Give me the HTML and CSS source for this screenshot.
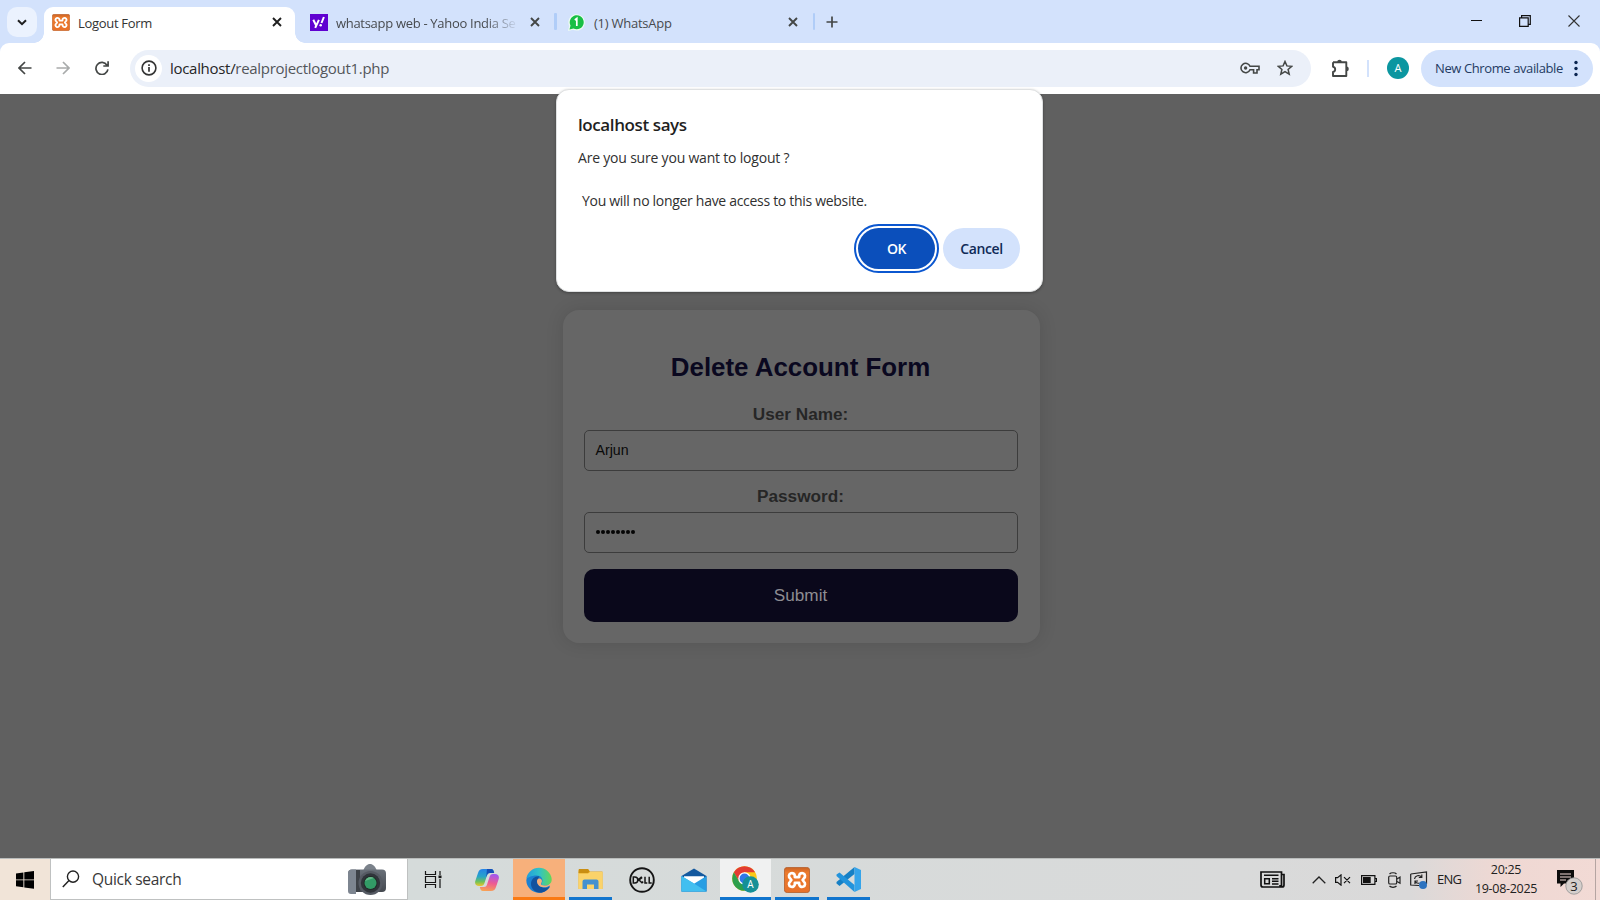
FILE: index.html
```
<!DOCTYPE html>
<html lang="en">
<head>
<meta charset="utf-8">
<title>Logout Form</title>
<link rel="stylesheet" href="styles.css">
</head>
<body>
<svg width="0" height="0" class="defs">
  <defs>
    <linearGradient id="xo" x1="0" y1="0" x2="0" y2="1"><stop offset="0" stop-color="#c96224"/><stop offset=".2" stop-color="#ec7a2c"/><stop offset="1" stop-color="#e8712a"/></linearGradient>
    <symbol id="xampp" viewBox="0 0 24 24">
      <rect x=".4" y=".4" width="23.2" height="23.2" rx="2.5" fill="url(#xo)" stroke="#b5602c" stroke-width=".8"/>
      <path d="M10 9.300V8.300a2.700 2.700 0 1 0-4.400 2.100L6.800 12l-1.200 1.600a2.700 2.700 0 1 0 4.400 2.100V14.700h4v1a2.700 2.700 0 1 0 4.400-2.100L17.200 12l1.200-1.600a2.700 2.700 0 1 0-4.400-2.100V9.300z" fill="none" stroke="#fff" stroke-width="2.500" stroke-linejoin="round"/>
    </symbol>
    <symbol id="close" viewBox="0 0 10 10"><path d="M1 1l8 8M9 1L1 9" fill="none" stroke="currentColor" stroke-width="1.900"/></symbol>
  </defs>
</svg>
<div class="screen">
  <header class="tabstrip">
    <div class="tab-search"><svg width="10" height="7" viewBox="0 0 10 7"><path d="M1 1.200l4 4 4-4" fill="none" stroke="#1f1f1f" stroke-width="2"/></svg></div>
    <div class="tab active">
      <svg class="fav" width="18" height="17" viewBox="0 0 24 24" preserveAspectRatio="none"><use href="#xampp"/></svg>
      <span class="tab-title t-logout">Logout Form</span>
      <svg class="x" width="10" height="10"><use href="#close"/></svg>
    </div>
    <div class="tab t2">
      <svg class="fav" width="18" height="17" viewBox="0 0 18 17"><rect width="18" height="17" fill="#5f01d1"/><path d="M3.300 5.800l2.600 5.200M8.900 5.800l-3.700 8M13.900 3l-2.400 6" fill="none" stroke="#fff" stroke-width="2"/><circle cx="10.700" cy="11.300" r="1.250" fill="#fff"/></svg>
      <span class="tab-title t-yahoo">whatsapp web - Yahoo India Se</span>
      <svg class="x" width="10" height="10"><use href="#close"/></svg>
    </div>
    <i class="sep"></i>
    <div class="tab t3">
      <svg class="fav" width="17" height="17" viewBox="0 0 17 17"><path d="M0 17L1.200 12A8.200 8.200 0 1 1 5 15.800z" fill="#eefcf2"/><path d="M1.500 15.500l1-4A7 7 0 1 1 5.500 14.500z" fill="#18bf45"/><path d="M6.800 6l2-1.500V12" fill="none" stroke="#fff" stroke-width="1.700"/></svg>
      <span class="tab-title t-wa">(1) WhatsApp</span>
      <svg class="x" width="10" height="10"><use href="#close"/></svg>
    </div>
    <i class="sep s2"></i>
    <svg class="plus" width="12" height="12" viewBox="0 0 12 12"><path d="M6 .5v11M.5 6h11" stroke="#444746" stroke-width="1.700"/></svg>
    <div class="winctl">
      <svg width="11" height="12" viewBox="0 0 11 12"><path d="M0 5.500h11" stroke="#111"/></svg>
      <svg width="12" height="12" viewBox="0 0 12 12"><path d="M.600 2.800h8.600v8.600H.600zM2.600 2.600V.700h8.700v8.700H9.300" fill="none" stroke="#111" stroke-width="1.200"/></svg>
      <svg width="12" height="12" viewBox="0 0 12 12"><path d="M.5.500l11 11M11.500.500l-11 11" stroke="#333" stroke-width="1.100"/></svg>
    </div>
  </header>

  <div class="toolbar-bg">
  <nav class="toolbar">
    <svg class="nav-back" width="14" height="14" viewBox="0 0 14 14"><path d="M13.500 7H1.500M7 1L1 7l6 6" fill="none" stroke="#444746" stroke-width="1.700"/></svg>
    <svg class="nav-fwd" width="14" height="14" viewBox="0 0 14 14"><path d="M.500 7h12M7 1l6 6-6 6" fill="none" stroke="#a9abab" stroke-width="1.700"/></svg>
    <svg class="nav-re" width="14" height="14" viewBox="0 0 14 14"><path d="M12 4.200A6 6 0 1 0 12.900 8.300M13.100.300v4.700H8.300" fill="none" stroke="#444746" stroke-width="1.700"/></svg>
    <div class="omnibox">
      <div class="info"><svg width="16" height="16" viewBox="0 0 16 16"><circle cx="8" cy="8" r="6.900" fill="none" stroke="#333" stroke-width="1.600"/><path d="M8 7v4.800M8 4.200v1.700" stroke="#333" stroke-width="1.700"/></svg></div>
      <span class="url">localhost/<em>realprojectlogout1.php</em></span>
      <svg class="key" width="20" height="12" viewBox="0 0 20 12"><circle cx="5.600" cy="6" r="1.700" fill="#444746"/><path d="M10 4.200A4.700 4.700 0 1 0 10 7.800H13.600V11H17V7.800H19V4.200z" fill="none" stroke="#444746" stroke-width="1.600"/></svg>
      <svg class="star" width="16" height="16" viewBox="0 0 16 16"><path d="M8 1.500l1.900 4.400 4.800.4-3.600 3.100 1.100 4.700L8 11.600l-4.200 2.500 1.100-4.700L1.300 6.300l4.800-.4z" fill="none" stroke="#444746" stroke-width="1.500"/></svg>
    </div>
    <svg class="ext" width="19" height="19" viewBox="0 0 19 19"><path d="M2 3.200h13.300v4.500M15.300 12v5H2v-4a2.700 2.700 0 0 0 0-5.300V3.200M15.300 7v6" fill="none" stroke="#444746" stroke-width="1.900" stroke-linejoin="round"/><path d="M6.200 3a2.300 2.300 0 0 1 4.600 0zM15.500 7.600a2.300 2.300 0 0 1 0 4.600z" fill="#444746"/></svg>
    <i class="tsep"></i>
    <div class="avatar">A</div>
    <div class="update"><span>New Chrome available</span><svg width="4" height="17" viewBox="0 0 4 17"><g fill="#0a2450"><circle cx="2" cy="2.500" r="1.700"/><circle cx="2" cy="8.500" r="1.700"/><circle cx="2" cy="14.500" r="1.700"/></g></svg></div>
  </nav>
  </div>

  <main class="page">
    <form class="card">
      <h1>Delete Account Form</h1>
      <label>User Name:</label>
      <div class="field">Arjun</div>
      <label>Password:</label>
      <div class="field pw"><i></i><i></i><i></i><i></i><i></i><i></i><i></i><i></i></div>
      <div class="submit">Submit</div>
    </form>
  </main>

  <section class="dialog">
    <h2><span>localhost says</span></h2>
    <p class="m1"><span>Are you sure you want to logout ?</span></p>
    <p class="m2"><span>You will no longer have access to this website.</span></p>
    <div class="actions"><div class="btn ok">OK</div><div class="btn cancel">Cancel</div></div>
  </section>

  <footer class="taskbar">
    <div class="start"><svg width="18" height="18" viewBox="0 0 18 18"><path d="M0 2.500L7.400 1.400V8.400H0zM8.300 1.300L18 0V8.400H8.300zM0 9.300H7.400V16.300L0 15.300zM8.300 9.300H18V17.800L8.300 16.500z"/></svg></div>
    <div class="search">
      <svg width="18" height="18" viewBox="0 0 18 18"><circle cx="11" cy="6.600" r="5.600" fill="none" stroke="#222" stroke-width="1.400"/><path d="M7 10.600L.8 17" stroke="#222" stroke-width="1.500"/></svg>
      <span class="qs">Quick search</span>
      <svg class="cam" width="38" height="33" viewBox="0 0 38 33">
        <defs><linearGradient id="cg" x1="0" y1="0" x2="0" y2="1"><stop offset="0" stop-color="#697079"/><stop offset="1" stop-color="#454950"/></linearGradient></defs>
        <path d="M15 8C17 3 19 1 22 1s5 2 7 7z" fill="#7b828b"/><rect x="0" y="6.500" width="38" height="22.500" rx="4" fill="url(#cg)"/><path d="M4 6.500h4V31H3a3 3 0 0 1-3-3V10.500a4 4 0 0 1 4-4z" fill="#7d8590"/><path d="M8 7h4v22H8z" fill="#3d4147"/><circle cx="22.500" cy="20" r="12" fill="#555a63"/><circle cx="22.500" cy="20" r="9.700" fill="#30343a"/><circle cx="22.500" cy="20" r="6.900" fill="#202c28"/><circle cx="22.500" cy="20" r="6" fill="#329b66"/><path d="M17 18a6 6 0 0 1 9-3z" fill="#65b889"/>
      </svg>
    </div>
    <div class="apps">
      <div class="app tv"><svg width="18" height="17" viewBox="0 0 18 17"><path d="M1.500 0v3.500H11.500V0M1.500 5.500h10v6h-10zM1.500 17v-3.500H11.500V17M16 0v4M16 8v9" fill="none" stroke="#151515" stroke-width="1.200"/><path d="M14.500 4.500h3v2.600h-3z" fill="#151515"/></svg></div>
      <div class="app"><svg width="24" height="24" viewBox="0 0 24 24">
        <defs><linearGradient id="c1" x1="0" y1="0" x2="0" y2="1"><stop offset="0" stop-color="#2383e8"/><stop offset=".45" stop-color="#27a5c8"/><stop offset=".75" stop-color="#72c257"/><stop offset="1" stop-color="#edc52c"/></linearGradient><linearGradient id="c2" x1=".5" y1="0" x2=".3" y2="1"><stop offset="0" stop-color="#a457ed"/><stop offset=".5" stop-color="#ee5b92"/><stop offset="1" stop-color="#f8a353"/></linearGradient></defs>
        <path d="M8 1h8c2 0 2.600 1.300 3.200 4H15c-2 0-2.600 1-3.200 3L9.500 15c-.6 2-1.600 3-3.500 3H4c-3 0-4.500-2-3.700-5L3 5c.9-2.800 2-4 5-4z" fill="url(#c1)"/><path d="M12 1h4c2 0 2.600 1.300 3.200 4H15c-2 0-2.600 1-3.200 3l-.6 1z" fill="#154fb5"/><path d="M16 23H8c-2 0-2.600-1.300-3.200-4H9c2 0 2.600-1 3.200-3l2.300-7c.6-2 1.600-3 3.500-3h2c3 0 4.500 2 3.700 5L21 19c-.9 2.800-2 4-5 4z" fill="url(#c2)"/></svg></div>
      <div class="app edge"><svg width="26" height="26" viewBox="0 0 26 26">
        <defs><linearGradient id="e1" x1="0" y1=".4" x2="1" y2=".4"><stop offset="0" stop-color="#239ddc"/><stop offset=".5" stop-color="#30c2c8"/><stop offset="1" stop-color="#65d657"/></linearGradient></defs>
        <path d="M.300 13A12.700 12.700 0 0 0 13 25.700c5 0 9-2.700 11-6.700L14 8H2z" fill="#1b80d2"/><path d="M.300 12A12.800 12.800 0 0 1 25.700 12c.3 5-3.700 6.500-7 6.500-3 0-3.700-1.300-3-2.200C18 12 15 8.500 10.500 8.500 5 8.500 1 11 .300 12z" fill="url(#e1)"/><path d="M13 9.300C9 9 5 12 5 17s4.500 8.700 9 8.700c4 0 8-2.700 9.800-6-1.800 1-4 1.300-6 1-5-.7-7.300-5-5.500-8.700z" fill="#12529e"/><path d="M15.200 16.300c1.500-1.800.8-4.600-1.600-4.800-2.200-.1-3 1.900-2.500 3.900.9 4 5.500 5.700 9.900 4.600l3.100-1.700.9-2.300c-2.600 3.400-11.300 3.300-9.800.3z" fill="#f6b07a"/></svg></div>
      <div class="app run"><svg width="25" height="21" viewBox="0 0 25 21"><path d="M1 0h9l2 2.500h12.500V20H.500V1z" fill="#e9ae26"/><path d="M1 0h9l1.500 2.500L10 4H.500z" fill="#c98e12"/><path d="M.500 4.500H10L12 3h12.500v17H.500z" fill="#fbd36a"/><path d="M4.500 20v-7.500A2 2 0 0 1 6.500 10.500h12a2 2 0 0 1 2 2V20h-4.500v-4.500H9V20z" fill="#4491cf"/></svg></div>
      <div class="app"><svg width="26" height="26" viewBox="0 0 26 26"><circle cx="13" cy="13" r="11.800" fill="none" stroke="#151515" stroke-width="1.900"/><path d="M4.300 10v6h1.500c4 0 4-6 0-6zM12.700 9.700L9.500 12.500l3.500 3.200 1.200-1M10.300 12.700l2.900-2.400M16 9.800V16h2.300M20.200 9.800V16h2.500" fill="none" stroke="#151515" stroke-width="1.500"/></svg></div>
      <div class="app"><svg width="26" height="24" viewBox="0 0 26 24"><path d="M.500 8L13 .500 25.500 8V23.500H.500z" fill="#14599f"/><path d="M3 8.300h20V15l-10 3-10-3z" fill="#fff"/><path d="M.500 8L13 15.500.500 23.500z" fill="#35b2e9"/><path d="M25.500 8v15.500H.500z" fill="#289ee3"/><path d="M.500 8L13 15.500 25.500 23.500H.500z" fill="#42bff0"/></svg></div>
      <div class="app run chrome"><svg width="27" height="27" viewBox="0 0 27 27"><circle cx="12.500" cy="12.500" r="12.300" fill="#fbc918"/><path d="M1.850 6.350A12.300 12.300 0 0 1 23.150 6.350H12.500L7.200 15.600z" fill="#e23c32"/><path d="M1.850 6.350A12.300 12.300 0 0 0 12.500 24.800L17.800 15.600H7.200z" fill="#2d9f4c"/><circle cx="12.500" cy="12.500" r="6.200" fill="#fff"/><circle cx="12.500" cy="12.500" r="4.900" fill="#3078e8"/><circle cx="18.500" cy="18.500" r="8.300" fill="#159097"/><text x="18.500" y="22.300" text-anchor="middle" class="ca">A</text></svg></div>
      <div class="app run"><svg width="26" height="26"><use href="#xampp"/></svg></div>
      <div class="app run"><svg width="25" height="25" viewBox="0 0 25 25"><path d="M18.500 0v7L3.500 19 .500 16.500v-1.500z" fill="#1680c5"/><path d="M.500 9v-1.500L3.500 5.500 18.500 18v7z" fill="#2293dc"/><path d="M18.500 0L25 3v19l-6.500 3z" fill="#35a4ea"/></svg></div>
    </div>
    <div class="tray">
      <svg class="news" width="25" height="17" viewBox="0 0 25 17"><path d="M1 1h20.500v15H3a2 2 0 0 1-2-2zM21.500 3.500H24V14a2 2 0 0 1-4 0" fill="none" stroke="#111" stroke-width="1.700"/><path d="M4 4.200h14.500M12 7.800h6.500M12 10.300h6.500M12 13h6.500" stroke="#111" stroke-width="1.500"/><path d="M4.700 7.700h4.600v5H4.700z" fill="none" stroke="#111" stroke-width="1.500"/></svg>
      <svg class="chev" width="14" height="8" viewBox="0 0 14 8"><path d="M.700 7.300L7 1l6.300 6.300" fill="none" stroke="#222" stroke-width="1.300"/></svg>
      <svg class="spk" width="16" height="12" viewBox="0 0 16 12"><path d="M.600 3.700h2L6 .900v10.200L2.600 8.300h-2zM9 3.200l6 6M15 3.200l-6 6" fill="none" stroke="#111" stroke-width="1.200"/></svg>
      <svg class="bat" width="16" height="10" viewBox="0 0 16 10"><path d="M.600.600h13.300v8.800H.600zM14 3.500h1.500v3H14" fill="none" stroke="#111" stroke-width="1.200"/><path d="M2 2h7.700v6H2z" fill="#111"/></svg>
      <svg class="meet" width="13" height="16" viewBox="0 0 13 16"><rect x=".700" y="4" width="8" height="8" rx="1.300" fill="none" stroke="#222" stroke-width="1.200"/><path d="M9 7l3-2v6.300L9 9.500M1.500 2C3 .300 7 .300 8.500 2M1.500 14c1.500 1.700 5.500 1.700 7 0" fill="none" stroke="#222" stroke-width="1.200"/></svg>
      <svg class="sync" width="18" height="18" viewBox="0 0 18 18"><path d="M.700 3L16.500 1v12M9 14.500L.700 14V3" fill="none" stroke="#222" stroke-width="1.200"/><path d="M4.500 8A4 4 0 0 1 11.500 6M11.800 3.500V6.500H8.800M5 13V10h3M5 10c1 2 3 2.500 4.500 2" fill="none" stroke="#222" stroke-width="1.200"/><circle cx="13" cy="14" r="4" fill="#2e73bf"/></svg>
      <span class="lang">ENG</span>
      <div class="clock"><span>20:25</span><span class="date">19-08-2025</span></div>
      <div class="notif"><svg width="26" height="26" viewBox="0 0 26 26"><path d="M0 1h17v13.500H7L3.500 18v-3.500H0z" fill="#0c0c0c"/><path d="M3 5h11M3 8h11M3 11h6" stroke="#efd9d5" stroke-width="1.100"/><circle cx="17" cy="17" r="8.200" fill="#d5cfcc" stroke="#999" stroke-width=".9"/><text x="17" y="21.500" text-anchor="middle" class="nb">3</text></svg></div>
      <i class="desk"></i>
    </div>
  </footer>
</div>
</body>
</html>
```

FILE: styles.css
```
* { box-sizing: border-box; }
body { margin: 0; font-family: "Open Sans", "Noto Sans", sans-serif; }
h1, h2, p { margin: 0; }
svg { display: block; flex: none; }
.defs { position: absolute; }
.screen { position: relative; width: 1600px; height: 900px; overflow: hidden; display: flex; flex-direction: column; }

.tabstrip { height: 43px; flex: none; background: #d3e2fc; display: flex; align-items: flex-start; padding-left: 7px; }
.tab-search { width: 30px; height: 30px; margin-top: 7px; border-radius: 10px; background: #ebf2fe; display: flex; align-items: center; justify-content: center; }
.tab { height: 36px; margin-top: 7px; display: flex; align-items: center; padding-bottom: 6px; color: #474a4e; }
.tab.active { position: relative; width: 251px; margin-left: 7px; padding-left: 8px; background: #fff; border-radius: 9px 9px 0 0; color: #333; }
.tab.active::before, .tab.active::after { content: ""; position: absolute; bottom: 0; width: 10px; height: 10px; }
.tab.active::before { left: -10px; background: radial-gradient(circle at 0 0, transparent 9.500px, #fff 10px); }
.tab.active::after { right: -10px; background: radial-gradient(circle at 100% 0, transparent 9.500px, #fff 10px); }
.tab-title { font-size: 13px; line-height: 20px; white-space: nowrap; overflow: hidden; margin-left: 8px; padding-top: 1px; }
.t-logout { letter-spacing: -.3px; }
.t-wa { letter-spacing: -.25px; }
.t-yahoo { width: 181px; letter-spacing: -.3px; -webkit-mask-image: linear-gradient(90deg, #000 82%, transparent 101%); mask-image: linear-gradient(90deg, #000 82%, transparent 101%); }
.x { margin-left: auto; margin-right: 13px; color: #444746; }
.active .x { color: #1f1f1f; }
.t2 { width: 258px; padding-left: 15px; }
.t2 .x { margin-right: 13px; }
.t3 { width: 241px; padding-left: 11px; }
.t3 .tab-title { margin-left: 9px; }
.t3 .x { margin-right: 0; }
.sep { width: 3px; height: 17px; margin: 13px 0 0 1px; background: #b0cdf8; border-radius: 1px; }
.s2 { width: 2px; margin-left: 15px; }
.plus { margin: 16px 0 0 11px; }
.winctl { display: flex; gap: 37px; margin: 15px 20px 0 auto; }

.toolbar-bg { background: #d3e2fc; flex: none; }
.toolbar { height: 51px; background: #fff; border-radius: 9px 9px 0 0; display: flex; align-items: center; padding: 0 7px 1px 17px; }
.nav-back { margin-left: 1px; }
.nav-fwd { margin-left: 24px; }
.nav-re { margin-left: 25px; }
.omnibox { margin-left: 21px; width: 1181px; height: 37px; border-radius: 19px; background: #ebf0f9; display: flex; align-items: center; padding: 0 18px 0 5px; }
.info { width: 27px; height: 27px; border-radius: 50%; background: #fff; display: flex; align-items: center; justify-content: center; }
.url { margin-left: 8px; font-size: 15px; color: #262626; letter-spacing: -.3px; line-height: 22px; }
.url em { font-style: normal; color: #53565a; }
.key { margin-left: auto; }
.star { margin-left: 17px; }
.ext { margin-left: 20px; }
.tsep { width: 2px; height: 17px; background: #d3e2fc; margin-left: 17px; }
.avatar { width: 22px; height: 22px; margin-left: 18px; border-radius: 50%; background: #0b96a0; color: #fff; font-size: 11px; line-height: 22px; text-align: center; }
.update { margin-left: auto; width: 172px; height: 37px; border-radius: 19px; background: #d3e2fc; color: #243b63; display: flex; align-items: center; padding-left: 14px; font-size: 13px; letter-spacing: -.4px; white-space: nowrap; }
.update svg { margin-left: auto; margin-right: 15px; }

.page { flex: 1; background: #606060; display: flex; justify-content: center; align-items: flex-start; padding-top: 216px; font-family: "Liberation Sans", Arial, sans-serif; }
.card { width: 477px; height: 333px; background: #666; border-radius: 16px; box-shadow: 0 0 18px rgba(0,0,0,.12); padding: 42px 22px 0 21px; margin-left: 2px; text-align: center; }
.card h1 { font-size: 25.900px; line-height: 30px; color: #0a081f; margin-bottom: 21px; }
.card label { display: block; font-size: 17.200px; font-weight: 700; line-height: 22px; color: #262626; margin-bottom: 5px; }
.field { height: 41px; border: 1px solid #3c3c3c; border-radius: 5px; padding: 0 0 2px 11px; font-size: 14.200px; color: #090909; display: flex; align-items: center; margin-bottom: 14px; }
.pw { gap: 1.100px; margin-bottom: 16px; }
.pw i { width: 4px; height: 4px; border-radius: 50%; background: #050505; }
.submit { height: 53px; background: #0a081b; border-radius: 10px; color: #8d8d92; font-size: 17.200px; line-height: 53px; }

.dialog { position: absolute; left: 556px; top: 89px; width: 487px; height: 203px; background: #fff; border-radius: 13px; border: 1px solid #dfe1e2; padding: 23px 22px 0 21px; color: #1f1f1f; box-shadow: 0 1px 3px rgba(0,0,0,.3); white-space: nowrap; }
.dialog h2 { font-size: 17px; font-weight: 600; line-height: 24px; letter-spacing: -.4px; }
.dialog p { font-size: 14px; line-height: 22px; color: #303030; letter-spacing: -.2px; }
.dialog .m1 { margin-top: 10px; }
.dialog .m2 { margin-top: 21px; padding-left: 4px; letter-spacing: -.3px; }
.actions { display: flex; justify-content: flex-end; gap: 8px; margin-top: 16px; }
.btn { width: 77px; height: 41px; border-radius: 21px; font-size: 14px; font-weight: 600; text-align: center; line-height: 41px; letter-spacing: -.4px; }
.ok { background: #0b4fbb; color: #fff; outline: 2px solid #0b57d0; outline-offset: 2px; }
.cancel { background: #d3e2fc; color: #0f2a57; }

.taskbar { height: 42px; flex: none; display: flex; align-items: stretch; background: linear-gradient(90deg, #f1e4d8 0, #f1e4d8 51px, #d5dbda 407px, #d9dada 1240px, #dad9d9 1410px, #efd8d3 1500px, #f2dad5 1600px); border-top: 1px solid #b9bcbb; }
.start { width: 50px; display: flex; align-items: center; justify-content: center; }
.search { width: 358px; background: #fff; border: 1px solid #bfc1c1; border-top: 0; display: flex; align-items: center; padding-left: 11px; }
.qs { font-size: 15.500px; margin-left: 12px; color: #383838; letter-spacing: -.3px; }
.cam { margin-left: auto; margin-right: 21px; }
.apps { display: flex; padding-left: 2px; }
.app { width: 51.600px; display: flex; align-items: center; justify-content: center; position: relative; }
.tv { padding-right: 6px; }
.edge { background: #f7b07b; }
.edge::after, .run::after { content: ""; position: absolute; bottom: 0; left: 4px; right: 4px; height: 3px; background: #1175ce; }
.edge::after { left: 0; right: 0; background: #fa7a13; }
.chrome { background: #f0f1f1; }
.chrome::after { left: 0; right: 0; }
.ca { font-size: 10px; fill: #fff; }
.tray { margin-left: auto; display: flex; align-items: center; color: #202020; }
.chev { margin-left: 27px; }
.spk { margin-left: 9px; }
.bat { margin-left: 10px; }
.meet { margin-left: 11px; }
.sync { margin-left: 9px; }
.lang { width: 24px; margin-left: 9px; font-size: 13px; line-height: 18px; padding-bottom: 1px; letter-spacing: -.7px; white-space: nowrap; }
.clock { width: 70px; margin-left: 10px; display: flex; flex-direction: column; align-items: center; font-size: 12.500px; line-height: 19px; letter-spacing: -.3px; white-space: nowrap; padding-bottom: 2px; }
.notif { margin-left: 16px; padding-top: 4px; }
.nb { font-size: 13px; fill: #222; }
.desk { width: 5px; height: 42px; margin-left: 12px; border-left: 1px solid #b5a5a2; }
```
